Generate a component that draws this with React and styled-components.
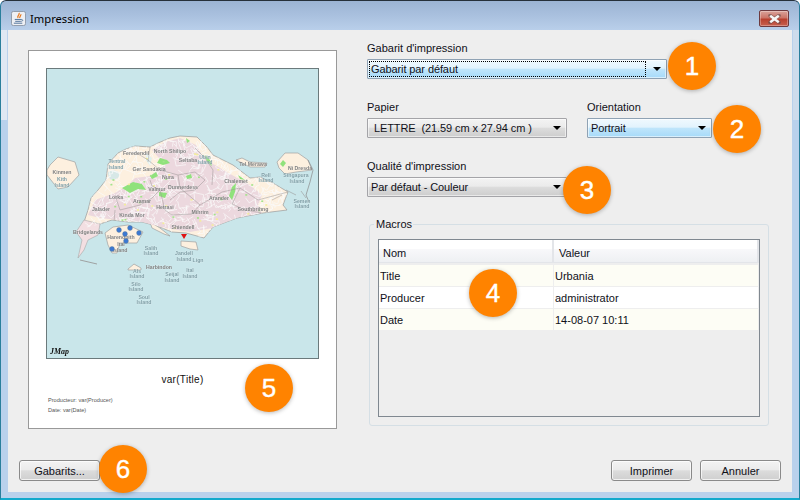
import React from 'react';
import styled, { createGlobalStyle } from 'styled-components';

const Global = createGlobalStyle`
  html, body { margin: 0; padding: 0; width: 800px; height: 500px; overflow: hidden; background: #fff; }
  * { box-sizing: border-box; }
`;

const Window = styled.div`
  position: relative;
  width: 800px;
  height: 500px;
  display: flex;
  flex-direction: column;
  padding: 0 8px 8px;
  border-radius: 6px 6px 0 0;
  background:
    linear-gradient(#dfe8f3, #dfe8f3) left 1px top 30px / 6px 90px no-repeat,
    linear-gradient(#cedcec, #cedcec) right 1px top 30px / 6px 90px no-repeat,
    #b9d1ec;
  font-family: "Liberation Sans", Arial, sans-serif;
  font-size: 11px;
  color: #101018;
  overflow: hidden;
  &::after {
    content: "";
    position: absolute;
    inset: 0;
    border: 1px solid #2c4a5c;
    border-top-color: #26303a;
    border-bottom: 2px solid #12a9cc;
    border-left-color: #2a7f9c;
    border-right-color: #2a7f9c;
    border-radius: 6px 6px 0 0;
    pointer-events: none;
  }
`;

const TitleBar = styled.header`
  flex: 0 0 30px;
  margin: 0 -8px;
  padding: 7px 11px 0;
  display: flex;
  align-items: center;
  justify-content: space-between;
  background: linear-gradient(180deg, #9bb3d3 0%, #a9c0de 50%, #b9cfea 100%);
`;

const TitleGroup = styled.div`
  display: flex;
  align-items: center;
  gap: 4px;
  font-family: "Noto Sans", "Open Sans", sans-serif;
  font-size: 11.2px;
  color: #000;
`;

const CloseButton = styled.div`
  width: 30px;
  height: 17px;
  display: flex;
  align-items: center;
  justify-content: center;
  border: 1px solid #6d3a3f;
  border-radius: 2px;
  background: linear-gradient(180deg, #d9a39b 0%, #cc7568 45%, #b8402f 55%, #c8604e 100%);
  box-shadow: inset 0 0 0 1px rgba(255, 255, 255, .3);
`;

const Client = styled.div`
  flex: 1;
  display: flex;
  flex-direction: column;
  background: #eeeeee;
`;

const Main = styled.div`
  flex: 1;
  display: flex;
  padding: 11px 23px 0 20px;
`;

const PreviewColumn = styled.div`
  flex: 0 0 339px;
  padding-top: 9px;
`;

const Paper = styled.div`
  width: 309px;
  height: 379px;
  padding: 17px 17px 0 17px;
  background: #fff;
  border: 1px solid #999;
  display: flex;
  flex-direction: column;
`;

const MapFrame = styled.div`
  width: 273px;
  height: 291px;
  border: 1px solid #6b7a7c;
  background: #c9e6ea;
  line-height: 0;
  overflow: hidden;
`;

const MapSvg = styled.svg`
  filter: blur(.25px);
`;

const PaperTitle = styled.div`
  margin-top: 15px;
  text-align: center;
  font-family: "Liberation Sans", sans-serif;
  font-size: 10px;
  line-height: 12px;
  letter-spacing: .3px;
  color: #111;
`;

const PaperNote = styled.div`
  margin: ${p => p.$first ? '11px' : '4px'} 0 0 2px;
  font-size: 5.6px;
  line-height: 6px;
  color: #555;
`;

const Form = styled.div`
  flex: 1;
  display: flex;
  flex-direction: column;
`;

const Row = styled.div`
  display: flex;
  gap: 20px;
  margin-top: ${p => p.$top || 0}px;
`;

const Field = styled.div`
  display: flex;
  flex-direction: column;
  gap: 4px;
  width: ${p => p.$width}px;
`;

const Label = styled.label`
  line-height: 14px;
  height: 14px;
`;

const Combo = styled.div`
  height: 20px;
  display: flex;
  align-items: center;
  padding: 0 5px 0 ${p => p.$pad || 3}px;
  border: 1px solid ${p => p.$blue ? '#8fa2b4' : '#a4a4a8'};
  border-radius: 1px;
  white-space: pre;
  letter-spacing: -.1px;
  color: #101018;
  background: ${p => p.$blue
    ? 'linear-gradient(180deg, #f0f9fe 0%, #e2f3fd 45%, #bfe5fb 52%, #a6daf9 100%)'
    : 'linear-gradient(180deg, #f3f3f3 0%, #ebebeb 45%, #dcdcdc 52%, #cdcdcd 100%)'};
  box-shadow: inset 0 0 0 1px rgba(255, 255, 255, .55);
`;

const ComboText = styled.span`
  flex: 1;
  align-self: stretch;
  margin: 1px 7px 1px -2px;
  padding-left: 2px;
  display: flex;
  align-items: center;
  outline: ${p => p.$focus ? '1px dotted #000' : 'none'};
  outline-offset: -1px;
`;

const Arrow = styled.span`
  width: 0;
  height: 0;
  border-left: 4px solid transparent;
  border-right: 4px solid transparent;
  border-top: 4px solid #000;
`;

const Group = styled.fieldset`
  margin: 20px 0 0 2px;
  padding: 8px 8px 8px 8px;
  width: 400px;
  height: 209px;
  border: 1px solid #d5dfe5;
  border-radius: 3px;
  min-width: 0;
`;

const Legend = styled.legend`
  padding: 0 1px 0 2px;
  margin-left: -4px;
  line-height: 14px;
`;

const Table = styled.div`
  height: 178px;
  border: 1px solid #808890;
  display: flex;
  flex-direction: column;
`;

const Grid = styled.div`
  display: grid;
  grid-template-columns: 175px 1fr;
  margin-bottom: ${p => p.$gap || 0}px;
`;

const HeadCell = styled.div`
  height: 23px;
  padding: 3px 0 0 ${p => p.$pad}px;
  display: flex;
  align-items: center;
  background: linear-gradient(180deg, #ffffff 0%, #ffffff 40%, #f8f8fa 42%, #eef0f3 100%);
  border-right: 2px solid #e3e5e9;
  border-bottom: 1px solid #e3e5e9;
`;

const Cell = styled.div`
  height: 22px;
  padding: 1px 0 0 1px;
  display: flex;
  align-items: center;
  background: ${p => p.$odd ? '#fdfdf5' : '#ffffff'};
  border-bottom: 1px solid #eeeeee;
  border-right: 1px solid #eeeeee;
`;

const Footer = styled.div`
  flex: 0 0 42px;
  padding: 0 11px 11px;
  display: flex;
  align-items: flex-end;
  gap: 8px;
`;

const Spacer = styled.div`
  flex: 1;
`;

const Button = styled.button`
  width: 81px;
  height: 21px;
  padding: 0;
  font: inherit;
  font-size: 11px;
  color: #101018;
  border: 1px solid #8a8a8a;
  border-radius: 3px;
  background: linear-gradient(180deg, #f3f3f3 0%, #ebebeb 45%, #dcdcdc 52%, #cfcfcf 100%);
  box-shadow: inset 0 0 0 1px rgba(255, 255, 255, .7);
`;

const Badge = styled.div`
  position: absolute;
  left: ${p => p.$x - 24}px;
  top: ${p => p.$y - 24}px;
  width: 48px;
  height: 48px;
  border-radius: 50%;
  display: flex;
  align-items: center;
  justify-content: center;
  background: #ff8300;
  color: #fff;
  font-family: "Liberation Sans", Arial, sans-serif;
  font-size: 26px;
  -webkit-text-stroke: .4px #fff;
  box-shadow: 0 1px 4px rgba(0, 0, 0, .28);
`;

const JavaIcon = () => (
  <svg width="15" height="15" viewBox="0 0 16 16">
    <rect x=".5" y=".5" width="15" height="15" rx="2" fill="#eef0f4" stroke="#8d97a6" />
    <path d="M8.5 2C10 4 6 5 7.5 7.5M10.5 3.5C11 5 8.5 6 9.5 7.5" fill="none" stroke="#e8781c" strokeWidth="1.3" />
    <path d="M4 9h7M4.5 11h6M3 13h9M11 9.2c2 -.4 2 1.6 0 1.8" fill="none" stroke="#4a6d96" strokeWidth="1" />
  </svg>
);

const CloseIcon = () => (
  <svg width="15" height="10" viewBox="0 0 15 10">
    <path d="M3 1.5L12 8.5M12 1.5L3 8.5" stroke="#5c4a4a" strokeWidth="3.6" strokeLinecap="round" opacity=".55" />
    <path d="M3.2 1.8L11.8 8.2M11.8 1.8L3.2 8.2" stroke="#f6f6f6" strokeWidth="2.6" />
  </svg>
);

const MAIN = '180,136 170,138 158,143 150,147 135,146 126,149 118,153 108,164 106,180 98,190 91,198 88,210 84,222 88,228 100,224 112,220 128,222 142,222 157,226 172,232 186,233 197,236 204,238 213,227 237,218 263,213 287,210 283,205 288,192 273,183 260,177 250,178 233,165 213,155 207,147 197,137';
const URBAN = '88,215 95,200 115,193 128,185 135,178 150,176 165,165 152,150 165,142 180,138 196,145 205,160 215,165 232,175 250,185 262,195 258,205 262,213 237,218 213,228 190,232 165,228 140,222 118,220 100,218';
const CREAM_ISLANDS = [
  '47,170 50,165 58,157 75,162 79,175 68,187 58,189 47,175',
  '105,233 113,227 128,225 143,232 137,243 120,243 117,253 112,253 108,245',
  '236,160 242,158 250,162 267,163 265,167 250,167 242,163',
  '277,162 285,153 298,153 308,160 312,170 296,172 285,174 279,168',
  '128,269 134,264 141,268 141,270 128,270',
  '181,241 196,242 198,250 190,249 181,246',
  '150,222 160,228 170,236 164,234 152,228',
];
const PINK_ISLANDS = ['84,220 100,224 98,235 88,240 84,250 78,258 82,240 76,232'];
const GREEN = [
  '160,158 167,160 170,163 163,165 157,163',
  '122,188 133,182 142,184 146,190 138,189 130,193',
  '159,192 167,193 165,198 159,196',
  '229,196 232,187 236,183 235,192 232,200',
  '186,176 191,174 192,178 187,179',
  '150,176 156,172 158,176 152,179',
  '205,155 210,160 212,166 207,162',
  '186,138 190,141 187,143',
  '238,175 245,180 240,179',
  '283,160 286,163 283,167 280,164',
];
const BORDERS = [
  '135,152 148,160 160,170 178,175 195,172 205,180 195,190 180,192 170,200',
  '150,180 152,186 160,190 165,210 172,215 192,214 200,205 212,198 222,192 240,188 258,200 288,192',
  '115,195 120,210 140,205 152,198 160,190',
  '178,175 180,188 192,198 200,205',
  '240,188 232,204 245,210 262,213',
  '115,210 114,222',
  '195,148 205,158 213,170 212,185',
  '150,147 148,162',
  '272,200 282,195',
];

const rng = (() => {
  let s = 12345;
  return () => {
    s = (s * 16807) % 2147483647;
    return s / 2147483647;
  };
})();

const ROADS = Array.from({ length: 520 }, () => {
  const x = 86 + rng() * 200;
  const y = 138 + rng() * 94;
  const a = rng() * Math.PI;
  const l = 4 + rng() * 7;
  const x2 = x + Math.cos(a) * l;
  const y2 = y + Math.sin(a) * l;
  const x3 = x2 + Math.cos(a + 1.5) * l * .7;
  const y3 = y2 + Math.sin(a + 1.5) * l * .7;
  return `${x.toFixed(1)},${y.toFixed(1)} ${x2.toFixed(1)},${y2.toFixed(1)} ${x3.toFixed(1)},${y3.toFixed(1)}`;
});

const DOTS = Array.from({ length: 44 }, () => ({
  x: 100 + rng() * 170,
  y: 150 + rng() * 80,
  g: rng() > .5,
}));

const LABELS = [
  ['Kinmen', 62, 174], ['Kith', 62, 181, 1], ['Island', 62, 187, 1],
  ['Tentral', 117, 163, 1], ['Island', 116, 169, 1], ['Feredendil', 136, 155],
  ['North Shilipo', 170, 153], ['Seltaba', 188, 162], ['Ubin', 205, 159, 1], ['Island', 205, 164, 1],
  ['Tel Merawa', 253, 166], ['Ni Dresda', 300, 170], ['Singapura', 296, 177, 1], ['Island', 297, 183, 1],
  ['Rell', 266, 177, 1], ['Island', 266, 182, 1], ['Semen', 302, 203, 1], ['Island', 302, 208, 1],
  ['Chalemet', 236, 183], ['Southbrihng', 253, 211], ['Arander', 219, 200], ['Mihrim', 200, 214],
  ['Dunnerdess', 183, 189], ['Nura', 168, 179], ['Ger Sandakia', 149, 171], ['Valmur', 157, 191],
  ['Lorka', 116, 199], ['Aramar', 142, 203], ['Hetrasi', 165, 209], ['Jalader', 101, 211],
  ['Kinda Mor', 132, 217], ['Shiendell', 183, 229], ['Bridgelands', 88, 234],
  ['Harendbith', 121, 239], ['Ital', 121, 246], ['Island', 120, 252],
  ['Salih', 151, 250, 1], ['Island', 151, 255, 1], ['Harbindon', 159, 269], ['Seijal', 172, 276, 1], ['Island', 172, 282, 1],
  ['Jandell', 184, 255, 1], ['Island', 184, 261, 1], ['Lign', 198, 262, 1], ['Ital', 190, 272, 1], ['Island', 190, 278, 1],
  ['Als', 137, 273, 1], ['Island', 137, 278, 1], ['Silo', 136, 286, 1], ['Island', 136, 291, 1], ['Soul', 144, 299, 1], ['Island', 144, 304, 1],
];

const PINS = [[119, 230], [130, 228], [125, 234], [139, 233], [126, 241], [112, 249]];

const MapDrawing = () => (
  <MapSvg width="271" height="289" viewBox="47 69 271 289">
    <defs>
      <clipPath id="mainland"><polygon points={MAIN} /></clipPath>
    </defs>
    <rect x="47" y="69" width="271" height="289" fill="#c9e6ea" />
    <polygon points={MAIN} fill="#fdf0df" stroke="#9a9a9a" strokeWidth=".7" />
    {CREAM_ISLANDS.map((p, i) => <polygon key={i} points={p} fill="#fdf0df" stroke="#a0a0a0" strokeWidth=".7" />)}
    {PINK_ISLANDS.map((p, i) => <polygon key={i} points={p} fill="#f3dfe2" stroke="#a8a8a8" strokeWidth=".6" />)}
    <polyline points="308,160 313,170 310,182 306,195 309,202" fill="none" stroke="#8a8a8a" strokeWidth=".7" />
    <polyline points="80,260 97,264" fill="none" stroke="#9a9a9a" strokeWidth=".9" />
    <path d="M286,190L296,195M301,191L306,198" fill="none" stroke="#9a9a9a" strokeWidth=".6" />
    <g clipPath="url(#mainland)">
      <polygon points={URBAN} fill="#ecd8de" />
      <path d="M108,172 C115,168 122,172 118,178 C112,182 108,180 108,172Z" fill="#c9e6ea" opacity=".75" />
      <path d="M146,153 L152,158 L150,166 L146,160Z" fill="#dff0ee" />
      {ROADS.map((r, i) => <polyline key={i} points={r} fill="none" stroke="#fbfbfb" strokeWidth=".7" />)}
      {GREEN.map((p, i) => <polygon key={i} points={p} fill="#90e27c" />)}
      {DOTS.map((d, i) => <rect key={i} x={d.x} y={d.y} width="2" height="1.6" fill={d.g ? '#a3e38a' : '#f3ee9a'} />)}
      {BORDERS.map((p, i) => <polyline key={i} points={p} fill="none" stroke="#9a9494" strokeWidth=".5" />)}
    </g>
    <polygon points={GREEN[9]} fill="#90e27c" />
    {LABELS.map(([t, x, y, teal], i) => (
      <text key={i} x={x} y={y} textAnchor="middle" fontFamily="Liberation Sans, sans-serif" fontSize="5.2" fontWeight="700"
        fill={teal ? '#7f9ea6' : '#808080'} stroke="#ffffff" strokeOpacity=".35" strokeWidth=".6" paintOrder="stroke">{t}</text>
    ))}
    {PINS.map(([x, y], i) => <circle key={i} cx={x} cy={y} r="2.4" fill="#3a78d4" stroke="#5a7a98" strokeWidth=".5" />)}
    <polygon points="181,234 187,234 184,239" fill="#e01414" />
    <text x="50" y="354" fontFamily="Liberation Serif, serif" fontStyle="italic" fontWeight="700" fontSize="8" fill="#111" textLength="19" lengthAdjust="spacingAndGlyphs">JMap</text>
  </MapSvg>
);

const rows = [
  ['Title', 'Urbania'],
  ['Producer', 'administrator'],
  ['Date', '14-08-07 10:11'],
];

const badges = [
  [1, 692, 66], [2, 737, 129], [3, 587, 190], [4, 493, 293], [5, 269, 388], [6, 123, 469],
];

export default function App() {
  return (
    <>
      <Global />
      <Window>
        <TitleBar>
          <TitleGroup>
            <JavaIcon />
            <span>Impression</span>
          </TitleGroup>
          <CloseButton><CloseIcon /></CloseButton>
        </TitleBar>
        <Client>
          <Main>
            <PreviewColumn>
              <Paper>
                <MapFrame><MapDrawing /></MapFrame>
                <PaperTitle>var(Title)</PaperTitle>
                <PaperNote $first>Producteur: var(Producer)</PaperNote>
                <PaperNote>Date: var(Date)</PaperNote>
              </Paper>
            </PreviewColumn>
            <Form>
              <Row>
                <Field $width={300}>
                  <Label>Gabarit d'impression</Label>
                  <Combo $blue><ComboText $focus>Gabarit par défaut</ComboText><Arrow /></Combo>
                </Field>
              </Row>
              <Row $top={21}>
                <Field $width={200}>
                  <Label>Papier</Label>
                  <Combo $pad={6}><ComboText>LETTRE  (21.59 cm x 27.94 cm )</ComboText><Arrow /></Combo>
                </Field>
                <Field $width={125}>
                  <Label>Orientation</Label>
                  <Combo $blue><ComboText>Portrait</ComboText><Arrow /></Combo>
                </Field>
              </Row>
              <Row $top={21}>
                <Field $width={200}>
                  <Label>Qualité d'impression</Label>
                  <Combo><ComboText>Par défaut - Couleur</ComboText><Arrow /></Combo>
                </Field>
              </Row>
              <Group>
                <Legend>Macros</Legend>
                <Table>
                  <Grid $gap={2}>
                    <HeadCell $pad={4}>Nom</HeadCell>
                    <HeadCell $pad={5}>Valeur</HeadCell>
                  </Grid>
                  {rows.map(([k, v], i) => (
                    <Grid key={k}>
                      <Cell $odd={i % 2 === 0}>{k}</Cell>
                      <Cell $odd={i % 2 === 0}>{v}</Cell>
                    </Grid>
                  ))}
                </Table>
              </Group>
            </Form>
          </Main>
          <Footer>
            <Button>Gabarits...</Button>
            <Spacer />
            <Button>Imprimer</Button>
            <Button>Annuler</Button>
          </Footer>
        </Client>
        {badges.map(([n, x, y]) => <Badge key={n} $x={x} $y={y}>{n}</Badge>)}
      </Window>
    </>
  );
}
